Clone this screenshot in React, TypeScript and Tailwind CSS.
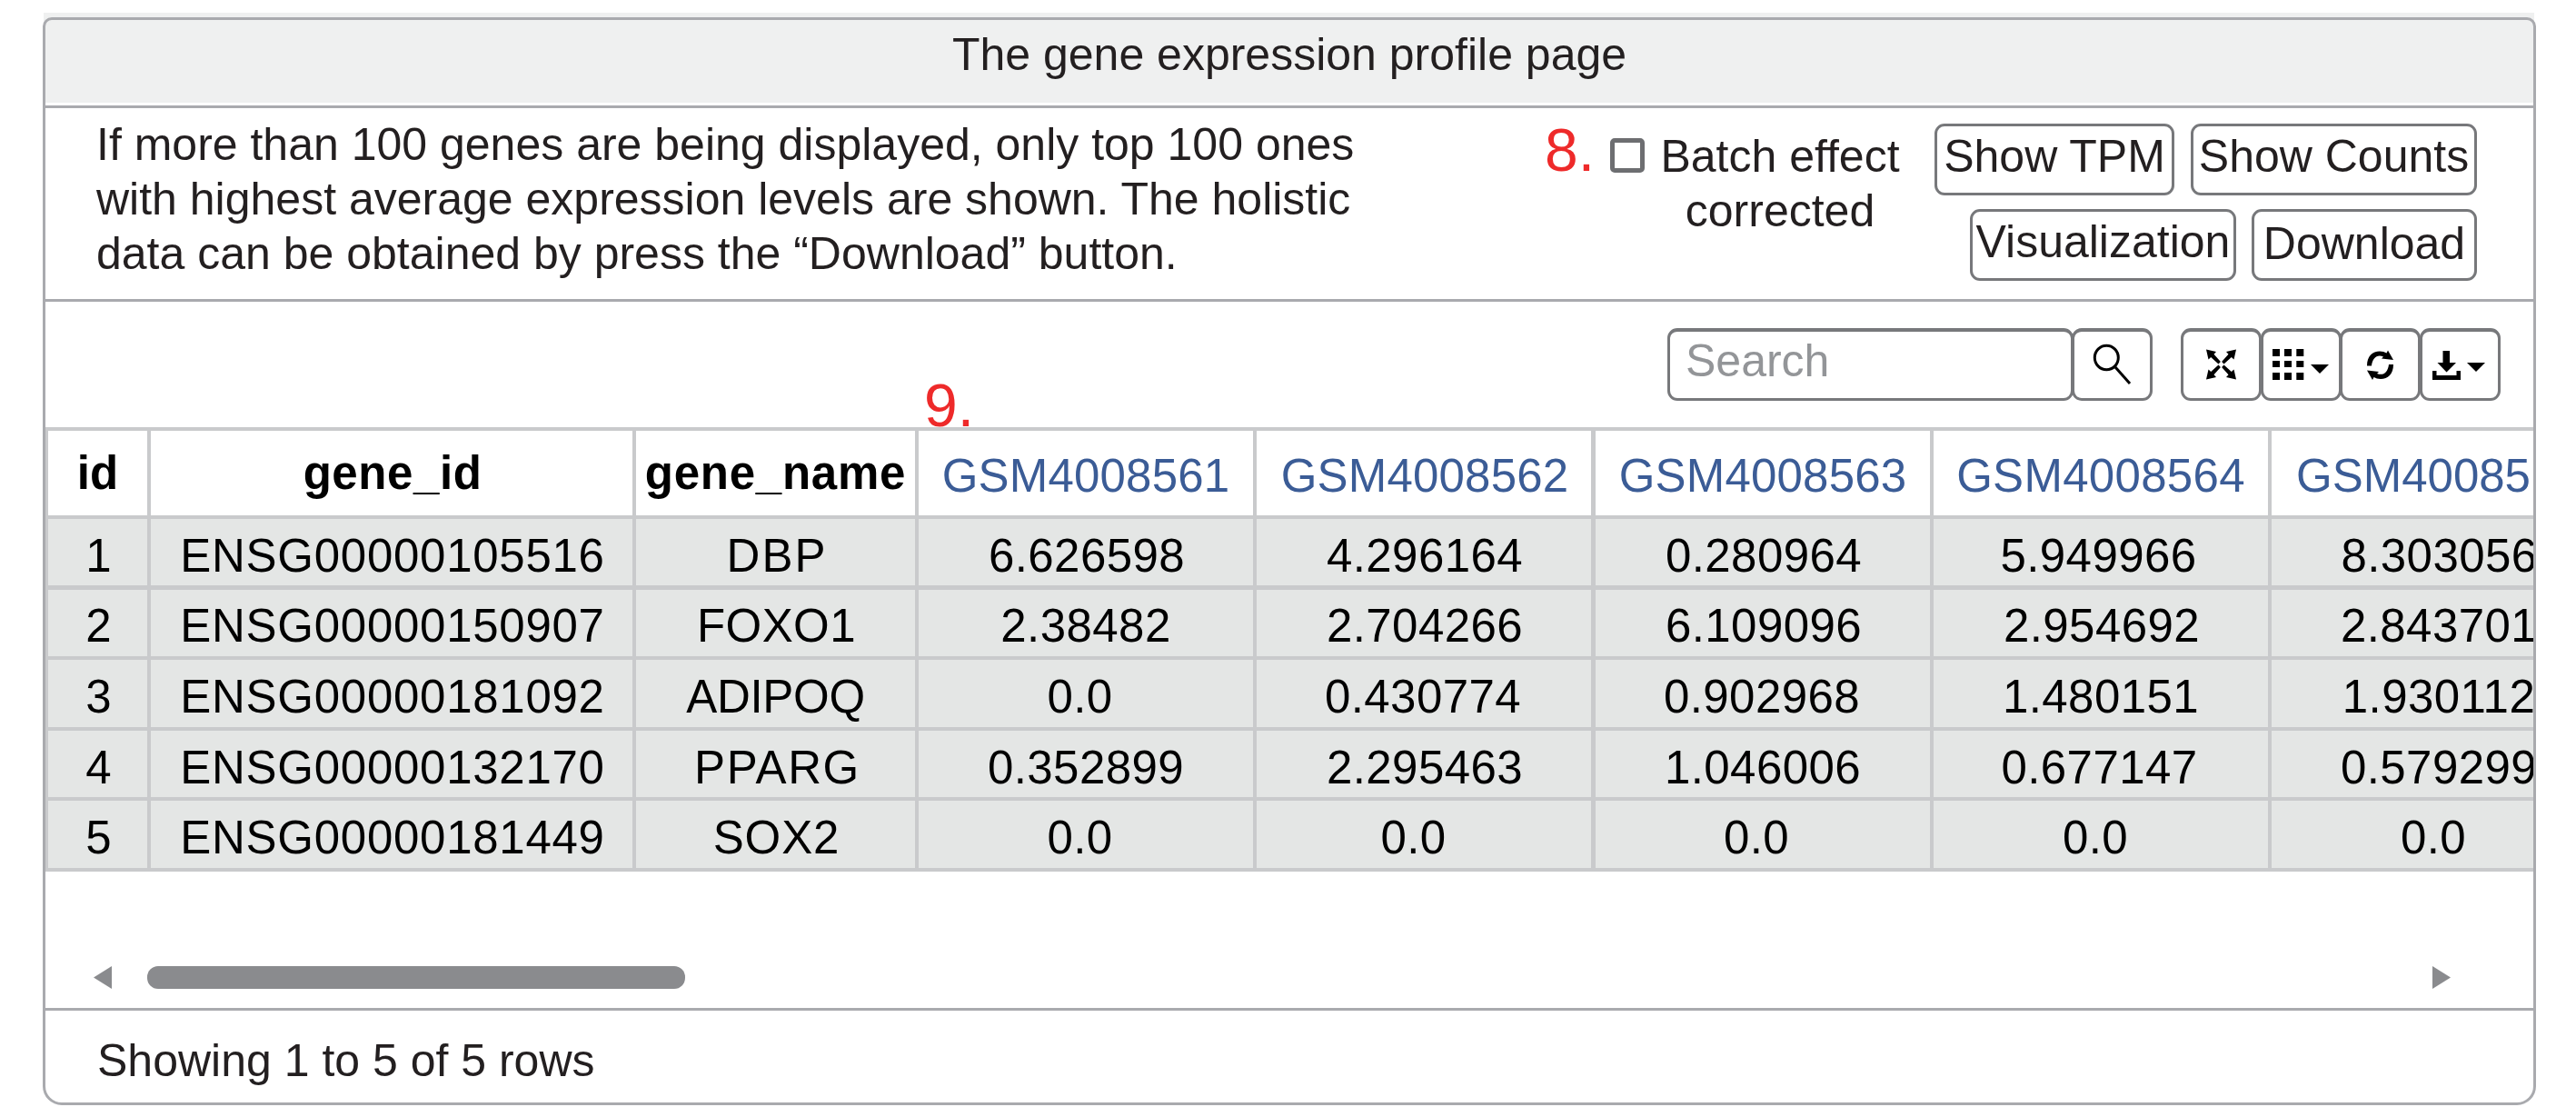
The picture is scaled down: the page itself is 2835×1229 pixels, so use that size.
import type { ReactNode } from "react";

type Cell = { text: string; cls?: string };

const COLS = [
  "w-[113px] border-r-4",
  "w-[534px] border-r-4",
  "w-[311px] border-r-4",
  "w-[372px] border-r-4",
  "w-[373px] border-r-[5px]",
  "w-[372px] border-r-4",
  "w-[372px] border-r-4",
  "w-[368px]",
];

const HEAD: Cell[] = [
  { text: "id", cls: "font-bold leading-[93px]" },
  { text: "gene_id", cls: "font-bold leading-[93px] tracking-[0.57px] pl-[2px]" },
  { text: "gene_name", cls: "font-bold leading-[93px] tracking-[0.75px]" },
  { text: "GSM4008561", cls: "text-[#3b5c96] leading-[99px] tracking-[0.2px]" },
  { text: "GSM4008562", cls: "text-[#3b5c96] leading-[99px] tracking-[0.2px] pl-[2px]" },
  { text: "GSM4008563", cls: "text-[#3b5c96] leading-[99px] tracking-[0.2px]" },
  { text: "GSM4008564", cls: "text-[#3b5c96] leading-[99px] tracking-[0.3px]" },
  { text: "GSM40085", cls: "text-[#3b5c96] leading-[99px] justify-start! pl-[27px]" },
];

const NAME_CLS = [
  "tracking-[2px] pl-[3px]",
  "tracking-[0.4px] pl-[2px]",
  "tracking-[-0.3px]",
  "tracking-[1.6px] pl-[4px]",
  "tracking-[0.9px] pl-[2px]",
];

const ROWS: { cls: string; id: string; gene: string; name: string; vals: Cell[] }[] = [
  {
    cls: "h-[78px] border-b-[5px] leading-[81px]", id: "1", gene: "ENSG00000105516", name: "DBP",
    vals: [{ text: "6.626598", cls: "pl-[2px]" }, { text: "4.296164", cls: "pl-[2px]" }, { text: "0.280964", cls: "pl-[2px]" }, { text: "5.949966", cls: "pr-[5px]" }, { text: "8.303056", cls: "pl-[1px]" }],
  },
  {
    cls: "h-[77px] border-b-4 leading-[79px]", id: "2", gene: "ENSG00000150907", name: "FOXO1",
    vals: [{ text: "2.38482" }, { text: "2.704266", cls: "pl-[2px]" }, { text: "6.109096", cls: "pl-[2px]" }, { text: "2.954692", cls: "pl-[2px]" }, { text: "2.843701" }],
  },
  {
    cls: "h-[78px] border-b-4 leading-[81px]", id: "3", gene: "ENSG00000181092", name: "ADIPOQ",
    vals: [{ text: "0.0", cls: "pr-[13px]" }, { text: "0.430774", cls: "pr-[2px]" }, { text: "0.902968", cls: "pr-[2px]" }, { text: "1.480151" }, { text: "1.930112" }],
  },
  {
    cls: "h-[77px] border-b-4 leading-[81px]", id: "4", gene: "ENSG00000132170", name: "PPARG",
    vals: [{ text: "0.352899" }, { text: "2.295463", cls: "pl-[2px]" }, { text: "1.046006" }, { text: "0.677147", cls: "pr-[3px]" }, { text: "0.579299" }],
  },
  {
    cls: "h-[78px] border-b-4 leading-[81px]", id: "5", gene: "ENSG00000181449", name: "SOX2",
    vals: [{ text: "0.0", cls: "pr-[13px]" }, { text: "0.0", cls: "pr-[23px]" }, { text: "0.0", cls: "pr-[14px]" }, { text: "0.0", cls: "pr-[12px]" }, { text: "0.0", cls: "pr-[12px]" }],
  },
];

function TableCell({ col, cell }: { col: number; cell: Cell }) {
  return (
    <div className={`flex shrink-0 justify-center border-[#c9cacc] ${COLS[col]} ${cell.cls ?? ""}`}>{cell.text}</div>
  );
}

function ActionButton({ children, className }: { children: string; className: string }) {
  return (
    <button className={`flex h-[79px] justify-center whitespace-nowrap rounded-[11px] border-3 border-[#77787b] ${className}`}>
      {children}
    </button>
  );
}

function ToolButton({ x, label, className = "", children }: { x: number; label: string; className?: string; children: ReactNode }) {
  return (
    <button
      aria-label={label}
      className={`h-[80px] w-[89px] shrink-0 rounded-[11px] border-3 border-t-4 border-[#77787b] ${className}`}
    >
      <svg className="block" width="83" height="73" viewBox={`${x + 3} 365 83 73`}>
        {children}
      </svg>
    </button>
  );
}

function ExpandArrow({ angle }: { angle: number }) {
  return (
    <g transform={`translate(2444.5 401) rotate(${angle})`}>
      <path d="M-16.5 -16.5 L-5.5 -14 L-8 -11.3 L-0.6 -3 L-3 -0.6 L-11.3 -8 L-14 -5.5 Z" />
    </g>
  );
}

function RefreshArrow() {
  return (
    <path d="M2605 402.500 C2605 392 2611 386.500 2619 386.500 Q2623.500 386.500 2626.500 388.500 L2628 385.500 L2634 396 L2621 394.500 L2623 392.500 C2616 389.500 2611 394 2610 402.500 Z" />
  );
}

export default function App() {
  return (
    <div className="h-[1229px] w-[2835px] overflow-hidden bg-white pl-[47px] pt-[14px] font-['Liberation_Sans',Arial,sans-serif] text-[50px] text-[#231f20]">
      <div className="ml-px h-[99px] w-[2741px] bg-[#eff0f0]" />
      <main className="relative -mt-[94px] h-[1197px] w-[2744px] overflow-hidden rounded-t-[10px] rounded-b-[21px] border-3 border-[#a9aaae]">
        <header className="h-[97px] border-b-3 border-[#a9aaae] text-center leading-[76px]">
          The gene expression profile page
        </header>

        <section className="flex h-[213px] items-start border-b-3 border-[#a9aaae] pl-[56px]">
          <p className="w-[1594px] shrink-0 pt-[10px] leading-[60px]">
            If more than 100 genes are being displayed, only top 100 ones
            <br />
            with highest average expression levels are shown. The holistic
            <br />
            data can be obtained by press the “Download” button.
          </p>
          <span className="mt-[9px] w-[55px] text-[66px] leading-[74px] text-[#ee2a2a]">8.</span>
          <label className="ml-[17px] flex items-start">
            <span className="mt-[33px] size-[38px] rounded-[5px] border-5 border-[#6d6e71]" />
            <span className="ml-[17px] mt-[23px] w-[264px] text-center leading-[60px]">
              Batch effect
              <br />
              corrected
            </span>
          </label>
          <div className="ml-auto mr-[62px] mt-[17px] flex flex-col items-end gap-[15px]">
            <div className="flex gap-[18px]">
              <ActionButton className="w-[264px] leading-[66px]">Show TPM</ActionButton>
              <ActionButton className="w-[315px] leading-[66px]">Show Counts</ActionButton>
            </div>
            <div className="flex gap-[17px]">
              <ActionButton className="w-[293px] leading-[66px]">Visualization</ActionButton>
              <ActionButton className="w-[248px] leading-[70px]">Download</ActionButton>
            </div>
          </div>
        </section>

        <section className="relative flex h-[138px] items-start pl-[1785px] pt-[29px]">
          <div className="h-[80px] w-[447px] shrink-0 rounded-[11px] border-3 border-t-4 border-[#77787b] pl-[17px] leading-[64px] text-[#939598]">
            Search
          </div>
          <ToolButton x={2280} label="Search" className="-ml-[2px]">
            <g fill="none" stroke="#000" strokeWidth="3">
              <ellipse cx="2318.3" cy="393.5" rx="13" ry="13.3" />
              <path d="M2328 404 L2344 422" />
            </g>
          </ToolButton>
          <ToolButton x={2400} label="Fullscreen" className="ml-[31px]">
            <ExpandArrow angle={0} />
            <ExpandArrow angle={90} />
            <ExpandArrow angle={180} />
            <ExpandArrow angle={270} />
          </ToolButton>
          <ToolButton x={2488} label="Columns" className="-ml-[1px]">
            {[2501, 2514, 2527.3].map((x) =>
              [384, 397, 410].map((y) => <rect key={`${x}-${y}`} x={x} y={y} width="8" height={y === 397 ? 7 : 8} />),
            )}
            <path d="M2543 401 H2563 L2553 411 Z" />
          </ToolButton>
          <ToolButton x={2575} label="Refresh" className="-ml-[2px]">
            <RefreshArrow />
            <g transform="rotate(180 2619.5 401.7)">
              <RefreshArrow />
            </g>
          </ToolButton>
          <ToolButton x={2663} label="Export" className="-ml-[1px]">
            <path d="M2688.500 386 H2696 V399 H2703 L2692.500 409.500 L2682.500 399 H2688.500 Z" />
            <path d="M2677 408 H2681.500 V413 H2703.500 V408 H2708 V418 H2677 Z" />
            <path d="M2715 399 H2735 L2725 409 Z" />
          </ToolButton>
          <span className="absolute left-[967px] top-[77px] text-[66px] leading-[74px] text-[#ee2a2a]">9.</span>
        </section>

        <div className="h-[489px] overflow-hidden border-l-3 border-t-4 border-[#c9cacc] text-[51px] text-black">
          <div className="flex h-[97px] border-b-4 border-[#c9cacc]">
            {HEAD.map((cell, i) => (
              <TableCell key={cell.text} col={i} cell={cell} />
            ))}
          </div>
          {ROWS.map((row, r) => (
            <div key={row.id} className={`flex border-[#c9cacc] bg-[#e4e6e5] ${row.cls}`}>
              <TableCell col={0} cell={{ text: row.id, cls: "pl-[2px]" }} />
              <TableCell col={1} cell={{ text: row.gene, cls: "tracking-[0.72px] pl-[2px]" }} />
              <TableCell col={2} cell={{ text: row.name, cls: NAME_CLS[r] }} />
              {row.vals.map((v, i) => (
                <TableCell key={i} col={i + 3} cell={{ text: v.text, cls: `tracking-[0.44px] ${v.cls ?? ""}` }} />
              ))}
            </div>
          ))}
        </div>

        <div className="flex h-[153px] items-start border-b-3 border-[#a9aaae] pl-[53px] pt-[104px]">
          <svg width="20" height="25" viewBox="0 0 20 25" fill="#8a8b8e">
            <path d="M20 0 V25 L0 12.500 Z" />
          </svg>
          <div className="ml-[39px] h-[25px] w-[592px] rounded-[12px] bg-[#8a8b8e]" />
          <svg className="ml-auto mr-[91px]" width="20" height="25" viewBox="0 0 20 25" fill="#8a8b8e">
            <path d="M0 0 V25 L20 12.500 Z" />
          </svg>
        </div>

        <footer className="pl-[57px] leading-[110px]">Showing 1 to 5 of 5 rows</footer>
      </main>
    </div>
  );
}
